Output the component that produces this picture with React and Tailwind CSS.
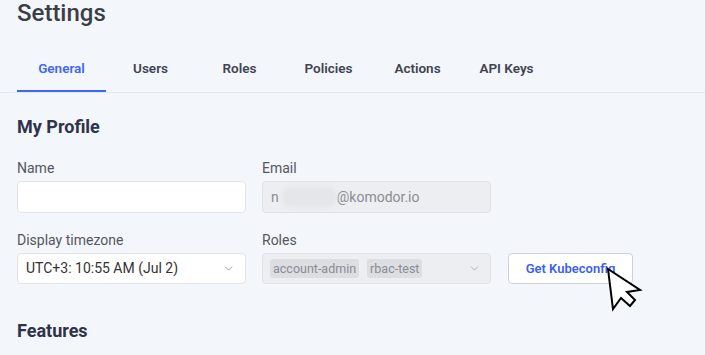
import React from "react";
import { ChevronDown } from "lucide-react";

const tabs = ["General", "Users", "Roles", "Policies", "Actions", "API Keys"];

export default function App() {
  return (
    <div className="w-[705px] h-[355px] overflow-hidden bg-[#f3f6fa] font-['Roboto',sans-serif] text-[#333]">
      {/* Title */}
      <div className="h-[44px] px-[17px]">
        <h1 className="text-[24px] leading-[26px] font-medium text-[#3c3e45]">Settings</h1>
      </div>

      {/* Tabs */}
      <div className="flex h-[49px] px-[17px] border-b border-[#e3e6eb]">
        {tabs.map((t, i) => (
          <div
            key={t}
            className={
              i === 0
                ? "w-[89px] flex items-center justify-center text-[13.5px] font-semibold text-[#3d67f5] border-b-2 border-[#3d67f5] pt-[2px]"
                : "w-[89px] flex items-center justify-center text-[13.5px] font-semibold text-[#3f4352]"
            }
          >
            {t}
          </div>
        ))}
      </div>

      {/* Content */}
      <div className="px-[17px] pt-[22px]">
        <h2 className="text-[18px] leading-[24px] font-bold text-[#2f3349]">My Profile</h2>

        <div className="flex gap-[16px] mt-[19px]">
          <Field label="Name">
            <div className="h-[32px] w-[229px] bg-white border border-[#e2e4e9] rounded-[4px]" />
          </Field>
          <Field label="Email">
            <div className="h-[32px] w-[229px] bg-[#eceef2] border border-[#dfe1e6] rounded-[4px] flex items-center px-[8px] text-[14px] text-[#8a8c93]">
              <span>n</span>
              <span className="w-[56px] h-[20px] rounded-full bg-[#e4e6ea] blur-[2px] ml-[2px]" />
              <span>@komodor.io</span>
            </div>
          </Field>
        </div>

        <div className="flex gap-[16px] mt-[17px] items-end">
          <Field label="Display timezone">
            <div className="h-[31px] w-[229px] bg-white border border-[#e2e4e9] rounded-[4px] flex items-center justify-between pl-[8px] pr-[10px] text-[14px] text-[#333]">
              <span>UTC+3: 10:55 AM (Jul 2)</span>
              <ChevronDown size={13} strokeWidth={1.5} className="text-[#888]" />
            </div>
          </Field>
          <Field label="Roles">
            <div className="h-[31px] w-[229px] bg-[#eceef2] border border-[#dfe1e6] rounded-[4px] flex items-center justify-between pl-[7px] pr-[9px]">
              <div className="flex gap-[8px]">
                <span className="h-[19px] px-[3px] rounded-[3px] bg-[#dcdee2] text-[12.5px] leading-[19px] text-[#8a8c93]">account-admin</span>
                <span className="h-[19px] px-[3px] rounded-[3px] bg-[#dcdee2] text-[12.5px] leading-[19px] text-[#8a8c93]">rbac-test</span>
              </div>
              <ChevronDown size={13} strokeWidth={1.5} className="text-[#a0a2a8]" />
            </div>
          </Field>
          <div className="relative ml-[1px]">
            <button className="h-[31px] w-[125px] bg-white border border-[#cdd0d8] rounded-[4px] text-[13px] font-semibold text-[#3d5ff5]">
              Get Kubeconfig
            </button>
            {/* mouse cursor over the button */}
            <svg
              className="absolute left-[91px] top-[10px]"
              width="48"
              height="52"
              viewBox="0 0 48 52"
            >
              <path
                d="M9 6 L14 46 L22 35 L31 43 L36 37 L28 29 L41 27 Z"
                fill="white"
                stroke="black"
                strokeWidth="2"
                strokeLinejoin="miter"
              />
            </svg>
          </div>
        </div>

        <h2 className="mt-[35px] text-[18px] leading-[24px] font-bold text-[#2f3349]">Features</h2>
      </div>
    </div>
  );
}

function Field({ label, children }) {
  return (
    <div className="flex flex-col gap-[3px]">
      <label className="text-[14px] leading-[20px] text-[#55575e]">{label}</label>
      {children}
    </div>
  );
}
